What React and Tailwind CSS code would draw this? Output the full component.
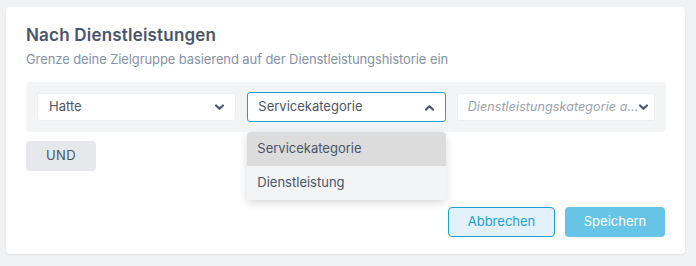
import React from "react";

function Chevron({ up = false }) {
  return (
    <svg width="9" height="7" viewBox="0 0 10 7" className={up ? "rotate-180" : ""}>
      <path d="M1.2 1.2 L5 5 L8.8 1.2" fill="none" stroke="#4a5568" strokeWidth="2.4" strokeLinecap="round" strokeLinejoin="round" />
    </svg>
  );
}

export default function App() {
  return (
    <div className="w-[696px] h-[266px] bg-[#f1f2f4] pt-[7px] pl-[6px]" style={{ fontFamily: "Inter, 'Open Sans', sans-serif" }}>
      <div className="w-[679px] h-[247px] bg-white rounded-[4px] shadow-[0_1px_3px_rgba(0,0,0,0.08)] pt-[16px] px-[20px]">
        <h2 className="text-[17px] font-semibold text-[#4a5568] leading-[24px] tracking-[0.2px]">Nach Dienstleistungen</h2>
        <p className="text-[13px] text-[#8592a6] leading-[18px] mt-[3px] tracking-[-0.1px]">
          Grenze deine Zielgruppe basierend auf der Dienstleistungshistorie ein
        </p>
        <div className="mt-[14px] w-[640px] h-[50px] bg-[#f3f4f6] rounded-[4px] flex items-center px-[11px] gap-[11px]">
          <div className="flex-1 basis-0 min-w-0 h-[28px] bg-white rounded-[3px] border border-[#eceef1] flex items-center justify-between pl-[11px] pr-[11px]">
            <span className="text-[13px] text-[#4a5568]">Hatte</span>
            <Chevron />
          </div>
          <div className="relative flex-1 basis-0 min-w-0 h-[30px] bg-white rounded-[3px] border border-[#1a9fd6] flex items-center justify-between pl-[10px] pr-[11px]">
            <span className="text-[13px] text-[#4a5568]">Servicekategorie</span>
            <Chevron up />
            <div className="absolute left-[-1px] top-[39px] w-[199px] rounded-[4px] overflow-hidden shadow-[0_3px_8px_rgba(0,0,0,0.15)] z-10">
              <div className="h-[34px] bg-[#dcdcdc] flex items-center pl-[10px] text-[13px] text-[#4a5568]">Servicekategorie</div>
              <div className="h-[34px] bg-[#f3f4f6] flex items-center pl-[10px] text-[13px] text-[#4a5568]">Dienstleistung</div>
            </div>
          </div>
          <div className="flex-1 basis-0 min-w-0 h-[28px] bg-white rounded-[3px] border border-[#eceef1] flex items-center justify-between pl-[10px] pr-[11px] gap-[1px]">
            <span className="text-[12.5px] italic text-[#9aa2ae] whitespace-nowrap tracking-[0.1px]">Dienstleistungskategorie a…</span>
            <div className="shrink-0"><Chevron /></div>
          </div>
        </div>
        <button className="mt-[9px] w-[70px] h-[30px] bg-[#e5e7eb] rounded-[4px] text-[13px] text-[#4a5568] tracking-[0.3px]">UND</button>
        <div className="flex justify-end gap-[10px] mt-[36px]">
          <button className="w-[107px] h-[30px] rounded-[4px] bg-[#e3f2fa] border border-[#1a9fd6] text-[13px] text-[#1a9fd6]">Abbrechen</button>
          <button className="w-[100px] h-[30px] rounded-[4px] bg-[#66c5e6] text-[13px] text-white">Speichern</button>
        </div>
      </div>
    </div>
  );
}
